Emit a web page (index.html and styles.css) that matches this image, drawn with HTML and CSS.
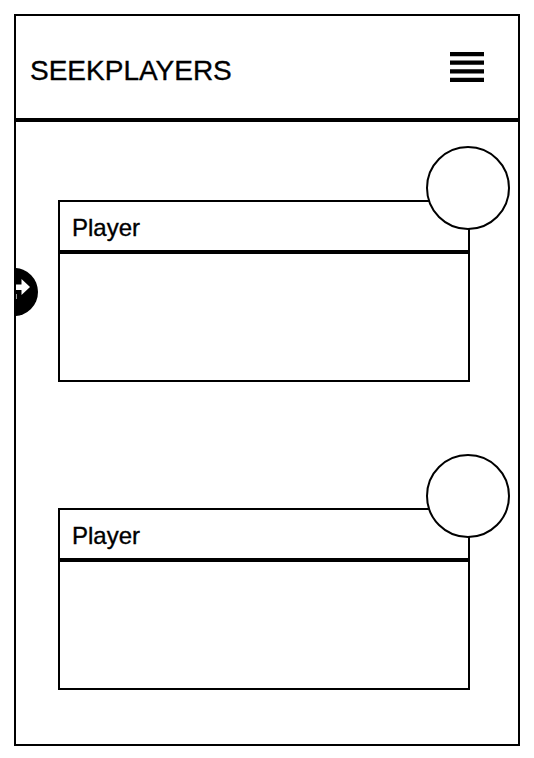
FILE: index.html
```html
<!DOCTYPE html>
<html lang="en">
<head>
<meta charset="utf-8">
<title>SEEKPLAYERS</title>
<link rel="stylesheet" href="styles.css">
</head>
<body>
<main class="screen">
  <header class="header">
    <h1 class="brand">SEEKPLAYERS</h1>
    <svg class="menu" width="34" height="30" viewBox="0 0 34 30">
      <path d="M0 0H34V4.3H0ZM0 8.5H34V12.8H0ZM0 17.2H34V21.5H0ZM0 25.7H34V30H0Z"/>
    </svg>
  </header>
  <section class="list">
    <article class="card">
      <h2 class="card-title">Player</h2>
      <div class="avatar"></div>
    </article>
    <article class="card">
      <h2 class="card-title">Player</h2>
      <div class="avatar"></div>
    </article>
    <svg class="drawer" width="22" height="48" viewBox="0 0 22 48">
      <circle cx="-2" cy="24" r="24"/>
      <path class="arrow" d="M0 16.5H5.5V11L14 19L5.5 27V22H0ZM0 26H.6V31H0Z"/>
    </svg>
  </section>
</main>
</body>
</html>
```

FILE: styles.css
```css
* { box-sizing: border-box; }
body { margin: 0; padding: 14px; background: #fff; color: #000; font-family: "Liberation Sans", Arial, sans-serif; }
.screen { width: 506px; height: 732px; border: 2px solid #000; }
.header { display: flex; justify-content: space-between; height: 106px; padding: 36px 34px 0 14px; border-bottom: 4px solid #000; }
h1, h2 { margin: 0; font-weight: 400; -webkit-text-stroke: 0.35px #000; }
.brand { font-size: 28px; line-height: 38px; }
.list { position: relative; display: flex; flex-direction: column; gap: 126px; padding: 78px 48px 0 42px; }
.card { position: relative; height: 182px; border: 2px solid #000; }
.card-title { height: 52px; padding-left: 12px; border-bottom: 4px solid #000; font-size: 24px; line-height: 52px; }
.avatar { position: absolute; top: -56px; right: -42px; width: 84px; height: 84px; border: 2px solid #000; border-radius: 50%; background: #fff; }
.drawer { position: absolute; left: 0; top: 146px; }
.arrow { fill: #fff; }
```
